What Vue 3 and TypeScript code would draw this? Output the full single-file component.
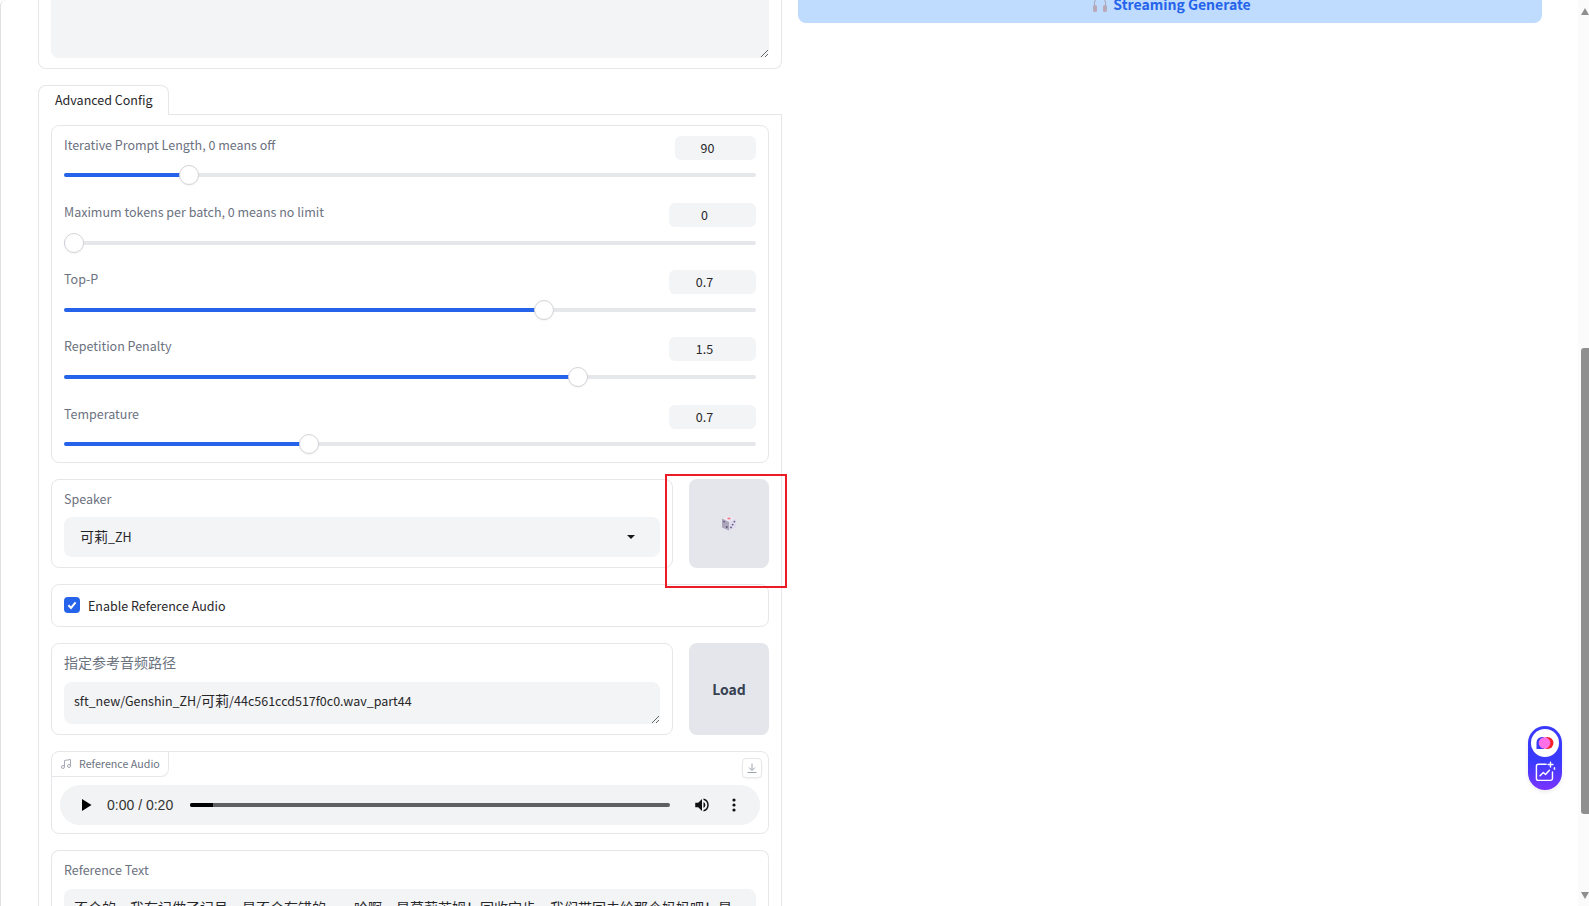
<script setup lang="ts">
interface SliderRow {
  label: string
  value: string
  center: number
  inputWidth: number
}

const trackStart = 64

const sliders: SliderRow[] = [
  { label: 'Iterative Prompt Length, 0 means off', value: '90', center: 189, inputWidth: 81 },
  { label: 'Maximum tokens per batch, 0 means no limit', value: '0', center: 74, inputWidth: 87 },
  { label: 'Top-P', value: '0.7', center: 544, inputWidth: 87 },
  { label: 'Repetition Penalty', value: '1.5', center: 578, inputWidth: 87 },
  { label: 'Temperature', value: '0.7', center: 309, inputWidth: 87 },
]

const refText = '不会的，我有记做了记号，是不会有错的……哈啊，是莫莉苏姆！回收宝步，我们带回去给那个妈妈吧！是'
</script>

<template>
  <div class="page">
    <div class="left">
      <div class="top-card">
        <textarea class="field top-area" readonly></textarea>
      </div>

      <div class="tab">Advanced Config</div>
      <div class="panel">
        <div class="box sliders">
          <div v-for="s in sliders" :key="s.label" class="slider-row">
            <div class="slider-head">
              <span class="label">{{ s.label }}</span>
              <span class="num" :style="{ width: s.inputWidth + 'px' }">{{ s.value }}</span>
            </div>
            <div class="slider">
              <div class="track"></div>
              <div class="fill" :style="{ width: s.center - trackStart + 'px' }"></div>
              <div class="thumb" :style="{ left: s.center - trackStart - 10 + 'px' }"></div>
            </div>
          </div>
        </div>

        <div class="split">
          <div class="box speaker">
            <div class="label">Speaker</div>
            <div class="select">
              <span><span class="cjk">可莉</span>_ZH</span>
              <i class="caret"></i>
            </div>
          </div>
          <button class="side-btn" type="button">
            <svg width="16" height="16" viewBox="0 0 16 16" class="dice">
              <path d="M8 0.5 15 3.5 8 7 1 3.5Z" fill="#ece8f2" />
              <path d="M1 3.5 8 7V15.5L1 12.5Z" fill="#aca6ba" />
              <path d="M15 3.5 8 7V15.5L15 12.5Z" fill="#e2dcef" />
              <ellipse cx="8" cy="3.6" rx="1.7" ry="1" fill="#f47f93" />
              <circle cx="3" cy="6.6" r=".9" fill="#5b5378" />
              <circle cx="5.8" cy="12" r=".9" fill="#5b5378" />
              <circle cx="10" cy="12.4" r=".9" fill="#5b5378" />
              <circle cx="11.6" cy="9.6" r=".9" fill="#5b5378" />
              <circle cx="13.4" cy="6.6" r=".9" fill="#5b5378" />
            </svg>
          </button>
        </div>

        <div class="box check-card">
          <span class="checkbox">
            <svg width="16" height="16" viewBox="0 0 16 16">
              <path d="M4.4 8.3 7 10.9 11.6 5.4" fill="none" stroke="#fff" stroke-width="2" />
            </svg>
          </span>
          <span class="check-label">Enable Reference Audio</span>
        </div>

        <div class="split">
          <div class="box path-card">
            <div class="label cjk">指定参考音频路径</div>
            <div class="field path-area">sft_new/Genshin_ZH/<span class="cjk">可莉</span>/44c561ccd517f0c0.wav_part44</div>
          </div>
          <button class="side-btn load" type="button">Load</button>
        </div>

        <div class="box audio-card">
          <div class="audio-tag">
            <svg width="12" height="12" viewBox="0 0 24 24" fill="none" stroke="#a5abb5" stroke-width="2">
              <path d="M9 18V5l12-2v13" />
              <circle cx="6" cy="18" r="3" />
              <circle cx="18" cy="16" r="3" />
            </svg>
            <span>Reference Audio</span>
          </div>
          <span class="download">
            <svg width="12" height="12" viewBox="0 0 24 24" fill="none" stroke="#9ca3af" stroke-width="2">
              <path d="M12 3v13M6 11l6 6 6-6M3 21h18" />
            </svg>
          </span>
          <div class="player">
            <svg class="play" width="11" height="12" viewBox="0 0 11 12"><path d="M1 0 10.5 6 1 12Z" fill="#000" /></svg>
            <span class="time">0:00 / 0:20</span>
            <div class="seek"><div class="seek-fill"></div></div>
            <svg class="vol" width="18" height="18" viewBox="0 0 24 24" fill="#111">
              <path d="M3 9v6h4l5 5V4L7 9H3zm13.5 3A4.5 4.5 0 0 0 14 7.97v8.05A4.5 4.5 0 0 0 16.5 12zM14 3.23v2.06a7 7 0 0 1 0 13.42v2.06a9 9 0 0 0 0-17.54z" />
            </svg>
            <svg class="dots" width="4" height="14" viewBox="0 0 4 14" fill="#111">
              <circle cx="2" cy="2" r="1.6" /><circle cx="2" cy="7" r="1.6" /><circle cx="2" cy="12" r="1.6" />
            </svg>
          </div>
        </div>

        <div class="box ref-card">
          <div class="label">Reference Text</div>
          <textarea class="field ref-area" readonly :value="refText"></textarea>
        </div>
      </div>
    </div>

    <div class="right">
      <button class="stream" type="button">
        <svg class="phones" width="20" height="18" viewBox="0 0 20 18" fill="none">
          <path d="M4.5 12V8a5.5 5.5 0 0 1 11 0v4" stroke="#a8a4b2" stroke-width="1" />
          <rect x="3" y="10" width="4" height="7" rx="1.6" fill="#b9a9b8" />
          <rect x="13" y="10" width="4" height="7" rx="1.6" fill="#b9a9b8" />
        </svg>
        <span>Streaming Generate</span>
      </button>
    </div>

    <div class="marker"></div>

    <div class="widget">
      <span class="widget-logo">
        <svg width="20" height="16" viewBox="0 0 20 16">
          <path d="M7 2h2v12H1.5V7.5A5.5 5.5 0 0 1 7 2Z" fill="#3b3bf5" />
          <circle cx="12.5" cy="8" r="6" fill="#f5222d" />
          <circle cx="9.5" cy="8" r="5.8" fill="#ff6fe8" />
        </svg>
      </span>
      <svg class="widget-icon" width="22" height="22" viewBox="0 0 20 20" fill="none" stroke="#fff" stroke-width="1.3" stroke-linecap="round" stroke-linejoin="round">
        <path d="M11 3H4a1.8 1.8 0 0 0-1.8 1.8v11A1.8 1.8 0 0 0 4 17.6h11a1.8 1.8 0 0 0 1.8-1.8V10" />
        <path d="M5.5 13.5 8.5 10.5 10.5 12.3 14 8.5" />
        <path d="M15 1v4.4M12.8 3.2h4.4M18.6 6v1.6" />
      </svg>
    </div>

    <div class="scrollbar">
      <i class="arrow up"></i>
      <div class="scroll-thumb"></div>
      <i class="arrow down"></i>
    </div>
  </div>
</template>

<style scoped>
.page {
  position: relative;
  box-sizing: border-box;
  height: 100vh;
  overflow: hidden;
  display: grid;
  grid-template-columns: 744px 744px;
  column-gap: 16px;
  align-items: start;
  padding-left: 37px;
  border-left: 1px solid #e0e0e2;
  border-top-left-radius: 6px;
  background: #fff;
  font-family: "Noto Sans CJK SC", "Noto Sans", sans-serif;
  font-size: 12.5px;
  color: #27272a;
}
.cjk {
  font-size: 14px;
}
.left {
  display: flex;
  flex-direction: column;
  align-items: stretch;
}
.top-card {
  box-sizing: border-box;
  height: 69px;
  padding: 0 12px;
  border: 1px solid #e5e7eb;
  border-top: none;
  border-radius: 0 0 8px 8px;
  margin-bottom: 16px;
}
.field {
  display: block;
  box-sizing: border-box;
  width: 100%;
  border: none;
  outline: none;
  margin: 0;
  background: #f3f4f6;
  border-radius: 8px;
  font: inherit;
  color: #27272a;
  resize: vertical;
}
.top-area {
  height: 58px;
  border-radius: 0 0 8px 8px;
}
.tab {
  position: relative;
  z-index: 1;
  box-sizing: border-box;
  width: 131px;
  height: 30px;
  padding-left: 16px;
  line-height: 28px;
  background: #fff;
  border: 1px solid #e5e7eb;
  border-bottom: none;
  border-radius: 8px 8px 0 0;
  margin-bottom: -1px;
}
.panel {
  display: flex;
  flex-direction: column;
  gap: 16px;
  padding: 10px 12px;
  border: 1px solid #e5e7eb;
}
.box {
  box-sizing: border-box;
  border: 1px solid #e5e7eb;
  border-radius: 8px;
  background: #fff;
}
.label {
  color: #6b7280;
  line-height: 20px;
}
.sliders {
  height: 338px;
  padding: 10px 12px 0;
  display: flex;
  flex-direction: column;
  gap: 17px;
}
.slider-row:first-child .slider {
  margin-top: 5px;
  margin-bottom: 1px;
}
.slider-row:last-child .slider-head {
  margin-top: 1px;
}
.slider-row:last-child .slider {
  margin-top: 5px;
}
.slider-head {
  display: flex;
  justify-content: space-between;
  align-items: flex-start;
  height: 24px;
}
.slider-head .label {
  line-height: 18px;
}
.num {
  box-sizing: border-box;
  height: 24px;
  line-height: 23px;
  padding-right: 16px;
  text-align: center;
  background: #f3f4f6;
  border-radius: 6px;
}
.slider {
  position: relative;
  height: 20px;
  margin-top: 6px;
}
.track,
.fill {
  position: absolute;
  left: 0;
  top: 8px;
  height: 4px;
  border-radius: 2px;
}
.track {
  right: 0;
  background: #e5e7eb;
}
.fill {
  background: #2563eb;
}
.thumb {
  position: absolute;
  top: 0;
  box-sizing: border-box;
  width: 20px;
  height: 20px;
  border-radius: 50%;
  background: #fff;
  border: 1px solid #d4d4d8;
  box-shadow: 0 1px 2px rgba(0, 0, 0, 0.05);
}
.split {
  display: flex;
  gap: 16px;
  align-items: stretch;
}
.speaker {
  flex: 1;
  height: 89px;
  padding: 9px 12px 0;
}
.select {
  display: flex;
  align-items: center;
  justify-content: space-between;
  height: 40px;
  margin-top: 8px;
  padding: 0 25px 2px 16px;
  box-sizing: border-box;
  background: #f3f4f6;
  border-radius: 8px;
}
.caret {
  width: 0;
  height: 0;
  margin-top: 2px;
  margin-left: 1px;
  border-left: 4px solid transparent;
  border-right: 4px solid transparent;
  border-top: 4px solid #18181b;
}
.side-btn {
  width: 80px;
  padding: 0;
  border: none;
  border-radius: 8px;
  background: #e4e6eb;
  display: flex;
  align-items: center;
  justify-content: center;
  font: inherit;
}
.dice {
  display: block;
  margin-bottom: 2px;
}
.load {
  font-size: 14px;
  font-weight: 600;
  color: #374151;
}
.check-card {
  display: flex;
  align-items: center;
  height: 43px;
  padding: 0 12px 1px;
}
.checkbox {
  width: 16px;
  height: 16px;
  border-radius: 4px;
  background: #2563eb;
  display: block;
}
.checkbox svg {
  display: block;
}
.check-label {
  margin-left: 8px;
}
.path-card {
  flex: 1;
  height: 92px;
  padding: 8px 12px 0;
}
.path-area {
  height: 42px;
  margin-top: 10px;
  padding: 8px 10px;
  line-height: 20px;
  overflow: hidden;
}
.audio-card {
  position: relative;
  height: 83px;
  padding: 0 8px;
}
.audio-tag {
  display: flex;
  align-items: center;
  gap: 7px;
  box-sizing: border-box;
  width: 117px;
  height: 25px;
  margin-left: -8px;
  padding-left: 8px;
  padding-bottom: 1px;
  font-size: 10.7px;
  white-space: nowrap;
  color: #6b7280;
  border-right: 1px solid #e5e7eb;
  border-bottom: 1px solid #e5e7eb;
  border-bottom-right-radius: 8px;
}
.download {
  position: absolute;
  top: 6px;
  right: 6px;
  box-sizing: border-box;
  width: 20px;
  height: 20px;
  border: 1px solid #e5e7eb;
  border-radius: 4px;
  background: #fff;
  display: flex;
  align-items: center;
  justify-content: center;
  box-shadow: 0 1px 2px rgba(0, 0, 0, 0.05);
}
.player {
  display: flex;
  align-items: center;
  height: 40px;
  margin-top: 8px;
  padding-left: 21px;
  border-radius: 20px;
  background: #f1f3f4;
}
.play {
  flex: none;
}
.time {
  margin-left: 15px;
  font-family: "Liberation Sans", Arial, sans-serif;
  font-size: 14px;
  color: #333;
  white-space: nowrap;
}
.seek {
  width: 480px;
  height: 4px;
  margin-left: 17px;
  border-radius: 2px;
  background: #5f5f5f;
  overflow: hidden;
}
.seek-fill {
  width: 23px;
  height: 4px;
  background: #000;
}
.vol {
  margin-left: 23px;
  flex: none;
}
.dots {
  margin-left: 21px;
  flex: none;
}
.ref-card {
  padding: 9px 12px 0;
  border-bottom: none;
}
.ref-area {
  height: 62px;
  margin-top: 9px;
  padding: 8px 10px;
  font-size: 14px;
  line-height: 20px;
}
.stream {
  display: flex;
  align-items: center;
  justify-content: center;
  width: 100%;
  height: 38px;
  margin-top: -15px;
  padding: 0 0 0 1px;
  border: none;
  border-radius: 8px;
  background: #bfdbfe;
  color: #2563eb;
  font: inherit;
  font-size: 14px;
  font-weight: 600;
}
.phones {
  margin-right: 3px;
}
.marker {
  position: absolute;
  left: 664px;
  top: 474px;
  width: 122px;
  height: 114px;
  box-sizing: border-box;
  border: 2px solid #ed1c24;
}
.widget {
  position: absolute;
  left: 1527px;
  top: 726px;
  box-sizing: border-box;
  width: 34px;
  height: 64px;
  padding-top: 3px;
  border-radius: 17px;
  background: linear-gradient(180deg, #3a3aff 0%, #3a3aff 55%, #7a34ff 100%);
  box-shadow: 0 2px 4px rgba(0, 0, 0, 0.08);
  display: flex;
  flex-direction: column;
  align-items: center;
}
.widget-logo {
  width: 28px;
  height: 28px;
  border-radius: 50%;
  background: #fff;
  display: flex;
  align-items: center;
  justify-content: center;
}
.widget-icon {
  margin-top: 4px;
}
.scrollbar {
  position: absolute;
  right: 0;
  top: 0;
  bottom: 0;
  width: 11px;
  background: #fbfbfb;
}
.scroll-thumb {
  position: absolute;
  right: 0;
  top: 348px;
  width: 8px;
  height: 466px;
  background: #8f8f8f;
  border-radius: 3px 0 0 3px;
}
.arrow {
  position: absolute;
  right: 0;
  width: 0;
  height: 0;
  border-left: 4px solid transparent;
  border-right: 4px solid transparent;
}
.arrow.up {
  top: 8px;
  border-bottom: 7px solid #8f8f8f;
}
.arrow.down {
  top: 892px;
  border-top: 7px solid #8f8f8f;
}
</style>

<style>
html,
body {
  margin: 0;
  overflow: hidden;
  background: #fff;
}
</style>
